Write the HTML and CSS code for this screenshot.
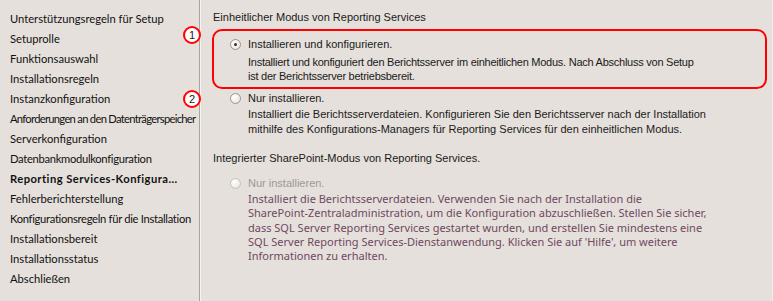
FILE: index.html
```
<!DOCTYPE html>
<html lang="de">
<head>
    <meta charset="UTF-8">
    <title>Reporting Services-Konfiguration</title>
    <link rel="stylesheet" href="styles.css">
</head>
<body>
<div class="page">
    <ul class="nav">
        <li>Unterstützungsregeln für Setup</li>
        <li>Setuprolle</li>
        <li>Funktionsauswahl</li>
        <li>Installationsregeln</li>
        <li>Instanzkonfiguration</li>
        <li class="tight">Anforderungen an den Datenträgerspeicher</li>
        <li>Serverkonfiguration</li>
        <li class="snug">Datenbankmodulkonfiguration</li>
        <li class="current">Reporting Services-Konfigura...</li>
        <li>Fehlerberichterstellung</li>
        <li class="snug">Konfigurationsregeln für die Installation</li>
        <li>Installationsbereit</li>
        <li>Installationsstatus</li>
        <li>Abschließen</li>
    </ul>
    <div class="content">
        <span class="badge badge-1">1</span>
        <span class="badge badge-2">2</span>

        <h2 class="group">Einheitlicher Modus von Reporting Services</h2>
        <div class="mark">
            <div class="option">
                <span class="radio checked"></span>
                <span class="label">Installieren und konfigurieren.</span>
            </div>
            <p class="desc desc-1">Installiert und konfiguriert den Berichtsserver im einheitlichen Modus. Nach Abschluss von Setup<br>ist der Berichtsserver betriebsbereit.</p>
        </div>
        <div class="option option-2">
            <span class="radio"></span>
            <span class="label">Nur installieren.</span>
        </div>
        <p class="desc desc-2">Installiert die Berichtsserverdateien. Konfigurieren Sie den Berichtsserver nach der Installation<br>mithilfe des Konfigurations-Managers für Reporting Services für den einheitlichen Modus.</p>

        <h2 class="group group-2">Integrierter SharePoint-Modus von Reporting Services.</h2>
        <div class="option option-3 disabled">
            <span class="radio"></span>
            <span class="label">Nur installieren.</span>
        </div>
        <p class="desc desc-3">Installiert die Berichtsserverdateien. Verwenden Sie nach der Installation die<br>SharePoint-Zentraladministration, um die Konfiguration abzuschließen. Stellen Sie sicher,<br>dass SQL Server Reporting Services gestartet wurden, und erstellen Sie mindestens eine<br>SQL Server Reporting Services-Dienstanwendung. Klicken Sie auf 'Hilfe', um weitere<br>Informationen zu erhalten.</p>
    </div>
</div>
</body>
</html>
```

FILE: styles.css
```
* {
    margin: 0;
    padding: 0;
}

ul {
    list-style: none;
}

body {
    background-color: #e5e0db;
    color: #1a1a1a;
    font-family: "Liberation Sans", Arial, sans-serif;
    font-size: 11px;
}

.page {
    display: flex;
    width: 773px;
    height: 301px;
    border-right: 1px solid #f1eeea;
    box-sizing: border-box;
}

.nav {
    width: 200px;
    padding: 9px 0 0 10px;
    box-sizing: border-box;
    border-right: 1px solid #aaa49e;
    box-shadow: 1px 0 0 #f6f3f0;
    font-family: Lato, "Liberation Sans", sans-serif;
}

.nav li {
    height: 20px;
    line-height: 20px;
    white-space: nowrap;
    font-size: 11.2px;
    color: #111;
}

.nav li.tight {
    letter-spacing: -0.7px;
}

.nav li.snug {
    letter-spacing: -0.3px;
}

.nav li.current {
    font-weight: bold;
    letter-spacing: 0.45px;
}

.content {
    position: relative;
    flex: 1;
    padding: 9px 0 0 13px;
}

.group {
    font-size: 11px;
    font-weight: normal;
    line-height: 16px;
}

.mark {
    width: 551px;
    height: 56px;
    margin: 4px 0 0 -1px;
    border: 2px solid #ff0000;
    border-radius: 10px;
}

.option {
    display: flex;
    align-items: center;
    height: 16px;
    margin: 5px 0 0 16px;
}

.radio {
    width: 11px;
    height: 11px;
    margin-right: 7px;
    border: 1px solid #9a958f;
    border-radius: 50%;
    background: radial-gradient(circle at 35% 35%, #ffffff 0%, #eceae7 70%, #d9d5d0 100%);
    box-sizing: border-box;
    position: relative;
}

.radio.checked::after {
    content: "";
    position: absolute;
    left: 3px;
    top: 3px;
    width: 3px;
    height: 3px;
    border-radius: 50%;
    background: #333;
}

.desc {
    margin: 3px 0 0 34px;
    line-height: 14px;
}

.desc-1 {
    letter-spacing: -0.25px;
}

.option-2 {
    margin: 1px 0 0 17px;
}

.desc-2 {
    margin-top: 1px;
    margin-left: 35px;
    line-height: 15px;
}

.group-2 {
    margin-top: 13px;
}

.option-3 {
    margin: 9px 0 0 17px;
}

.disabled .label {
    color: #9e9994;
}

.disabled .radio {
    border-color: #c4c0bb;
}

.desc-3 {
    margin: 1px 0 0 35px;
    line-height: 14.3px;
    font-family: "Noto Sans", "Liberation Sans", sans-serif;
    color: #6f4862;
}

.badge {
    position: absolute;
    left: -17px;
    width: 18px;
    height: 18px;
    border: 2px solid #ff0000;
    border-radius: 50%;
    background: #fff;
    box-sizing: border-box;
    text-align: center;
    line-height: 14px;
    font-size: 11px;
}

.badge-1 {
    top: 26px;
}

.badge-2 {
    top: 90px;
}
```
